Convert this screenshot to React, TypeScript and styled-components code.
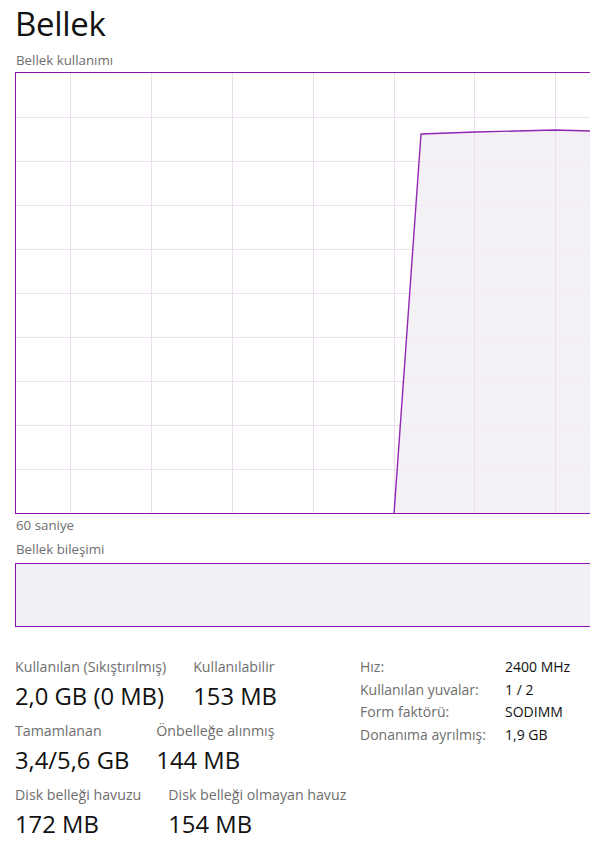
import React from "react";
import styled, { createGlobalStyle } from "styled-components";

const Global = createGlobalStyle`
  html, body { margin: 0; padding: 0; background: #ffffff; overflow: hidden; }
  body { font-family: "Open Sans", "Noto Sans", "Liberation Sans", sans-serif; color: #1a1a1a; }
`;

const Page = styled.div`
  width: 590px;
  height: 862px;
  padding: 0 0 0 15px;
  box-sizing: border-box;
  overflow: hidden;
`;

const Title = styled.h1`
  margin: 0;
  padding-top: 2px;
  font-size: 33px;
  font-weight: 400;
  line-height: 44px;
  letter-spacing: -0.3px;
  color: #111;
`;

const Caption = styled.div<{ $top?: number }>`
  font-size: 13.3px;
  line-height: 16px;
  color: #6e6e6e;
  margin-top: ${(p) => p.$top ?? 0}px;
  padding-left: 1px;
`;

const Frame = styled.div<{ $h: number; $top?: number; $fill?: string }>`
  width: 600px;
  height: ${(p) => p.$h}px;
  border: 1px solid #8b12ae;
  box-sizing: border-box;
  background: ${(p) => p.$fill ?? "#ffffff"};
  margin-top: ${(p) => p.$top ?? 0}px;
  overflow: hidden;
`;

const ChartSvg = styled.svg`
  display: block;
`;

const Stats = styled.div`
  display: flex;
  align-items: flex-start;
  margin-top: 31px;
`;

const LeftStats = styled.div`
  display: flex;
  flex-direction: column;
  width: 345px;
`;

const StatRow = styled.div<{ $top?: number }>`
  display: flex;
  gap: 27px;
  margin-top: ${(p) => p.$top ?? 0}px;
`;

const Stat = styled.div`
  display: flex;
  flex-direction: column;
`;

const StatLabel = styled.div`
  font-size: 14.2px;
  line-height: 18px;
  color: #6e6e6e;
  white-space: nowrap;
`;

const StatValue = styled.div`
  font-size: 23.8px;
  line-height: 30px;
  margin-top: 5px;
  color: #111;
  white-space: nowrap;
`;

const InfoTable = styled.div`
  display: grid;
  grid-template-columns: 145px auto;
  align-content: start;
  row-gap: 4.7px;
  font-size: 14px;
  line-height: 18px;
  white-space: nowrap;
`;

const InfoKey = styled.div`
  color: #6e6e6e;
`;

const InfoVal = styled.div`
  color: #111;
`;

const W = 600;
const H = 440;
const vLines = [54, 135, 216, 297, 378, 458, 539];
const hLines = [44, 88, 132, 176, 220, 264, 308, 352, 396];
const pts: [number, number][] = [
  [378, 441],
  [405, 61],
  [459, 59],
  [539, 57],
  [574, 58],
  [600, 58],
];

function UsageChart() {
  const line = pts.map((p) => p.join(",")).join(" ");
  const area = `${line} 600,441`;
  return (
    <ChartSvg width={W} height={H} viewBox={`0 0 ${W} ${H}`}>
      {hLines.map((y) => (
        <line key={"h" + y} x1={0} x2={W} y1={y + 0.5} y2={y + 0.5} stroke="#ecdff0" strokeWidth={1} />
      ))}
      <polygon points={area} fill="#f2eef5" opacity={0.85} />
      {vLines.map((x) => (
        <line key={"v" + x} x1={x + 0.5} x2={x + 0.5} y1={0} y2={H} stroke="#e8dde9" strokeWidth={1} />
      ))}
      <polyline points={line} fill="none" stroke="#9127b2" strokeWidth={1.4} />
    </ChartSvg>
  );
}

const left = [
  [
    ["Kullanılan (Sıkıştırılmış)", "2,0 GB (0 MB)"],
    ["Kullanılabilir", "153 MB"],
  ],
  [
    ["Tamamlanan", "3,4/5,6 GB"],
    ["Önbelleğe alınmış", "144 MB"],
  ],
  [
    ["Disk belleği havuzu", "172 MB"],
    ["Disk belleği olmayan havuz", "154 MB"],
  ],
];

const info = [
  ["Hız:", "2400 MHz"],
  ["Kullanılan yuvalar:", "1 / 2"],
  ["Form faktörü:", "SODIMM"],
  ["Donanıma ayrılmış:", "1,9 GB"],
];

export default function App() {
  return (
    <>
      <Global />
      <Page>
        <Title>Bellek</Title>
        <Caption $top={6}>Bellek kullanımı</Caption>
        <Frame $h={442} $top={4}>
          <UsageChart />
        </Frame>
        <Caption $top={3}>60 saniye</Caption>
        <Caption $top={8}>Bellek bileşimi</Caption>
        <Frame $h={64} $top={6} $fill="#f2eff5" />
        <Stats>
          <LeftStats>
            {left.map((row, i) => (
              <StatRow key={i} $top={i === 0 ? 0 : 11}>
                {row.map(([l, v]) => (
                  <Stat key={l}>
                    <StatLabel>{l}</StatLabel>
                    <StatValue>{v}</StatValue>
                  </Stat>
                ))}
              </StatRow>
            ))}
          </LeftStats>
          <InfoTable>
            {info.map(([k, v]) => (
              <React.Fragment key={k}>
                <InfoKey>{k}</InfoKey>
                <InfoVal>{v}</InfoVal>
              </React.Fragment>
            ))}
          </InfoTable>
        </Stats>
      </Page>
    </>
  );
}
